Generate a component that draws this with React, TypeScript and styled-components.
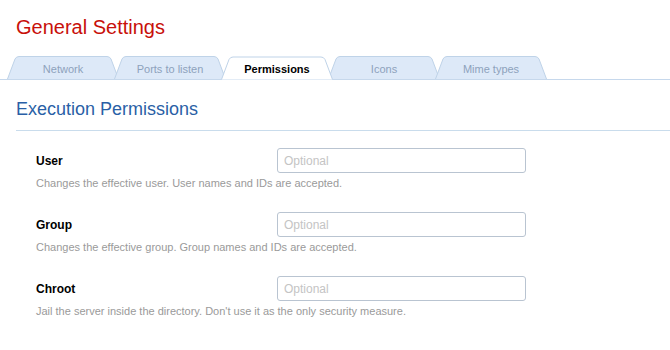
import {createGlobalStyle} from 'styled-components';
import styled from 'styled-components';

const tabs = ['Network', 'Ports to listen', 'Permissions', 'Icons', 'Mime types'];
const activeTab = 'Permissions';

const fields = [
    {label: 'User', help: 'Changes the effective user. User names and IDs are accepted.'},
    {label: 'Group', help: 'Changes the effective group. Group names and IDs are accepted.'},
    {label: 'Chroot', help: "Jail the server inside the directory. Don't use it as the only security measure."},
];

const TAB_W = 112;
const TAB_H = 23;

const TabShape: React.FC<{active: boolean}> = function ({active}) {
    const w = TAB_W;
    const h = TAB_H;
    const d = `M0.5,${h} L8,3 Q9.3,0.5 12,0.5 L${w - 12},0.5 Q${w - 9.3},0.5 ${w - 8},3 L${w - 0.5},${h}`;
    return (
        <TabSvg width={w} height={h} viewBox={`0 0 ${w} ${h}`}>
            <path d={d} fill={active ? '#ffffff' : '#dde9f8'} stroke="#bfd3e8" strokeWidth="1" />
        </TabSvg>
    );
};

const App: React.FC = function () {
    return (
        <Page>
            <GlobalStyle />
            <Title>General Settings</Title>
            <TabBar>
                {tabs.map(t => (
                    <Tab key={t} $active={t === activeTab}>
                        <TabShape active={t === activeTab} />
                        <TabLabel $active={t === activeTab}>{t}</TabLabel>
                    </Tab>
                ))}
            </TabBar>
            <Section>
                <SectionTitle>Execution Permissions</SectionTitle>
                {fields.map(f => (
                    <Field key={f.label}>
                        <FieldRow>
                            <Label>{f.label}</Label>
                            <Input placeholder="Optional" />
                        </FieldRow>
                        <Help>{f.help}</Help>
                    </Field>
                ))}
            </Section>
        </Page>
    );
};

/* Styled components */

const GlobalStyle = createGlobalStyle`
    body {
        margin: 0;
        background: #ffffff;
        font-family: "Liberation Sans", Arial, sans-serif;
    }
`;

const Page = styled.div`
    width: 670px;
    height: 350px;
    overflow: hidden;
    padding-top: 15px;
    box-sizing: border-box;
`;

const Title = styled.h1`
    margin: 0 0 17px 16px;
    font-size: 20px;
    line-height: 24px;
    font-weight: normal;
    color: #c8100a;
`;

const TabBar = styled.div`
    display: flex;
    height: 23px;
    padding-left: 7px;
    border-bottom: 1px solid #c6d8ec;
`;

const Tab = styled.div<{$active: boolean}>`
    position: relative;
    width: ${TAB_W}px;
    margin-right: -5px;
    margin-bottom: ${p => (p.$active ? '-1px' : '0')};
    height: ${p => (p.$active ? TAB_H + 1 : TAB_H)}px;
    z-index: ${p => (p.$active ? 2 : 1)};
    display: flex;
    justify-content: center;
    align-items: flex-start;
`;

const TabSvg = styled.svg`
    position: absolute;
    left: 0;
    top: 0;
    height: 100%;
    overflow: visible;
`;

const TabLabel = styled.span<{$active: boolean}>`
    position: relative;
    margin-top: 7px;
    font-size: 11px;
    line-height: 13px;
    font-weight: ${p => (p.$active ? 'bold' : 'normal')};
    color: ${p => (p.$active ? '#000000' : '#8da2bc')};
`;

const Section = styled.div`
    padding: 0 0 0 16px;
    margin-top: 18px;
`;

const SectionTitle = styled.h2`
    margin: 0 0 17px 0;
    padding-bottom: 10px;
    border-bottom: 1px solid #c9dcec;
    font-size: 18px;
    line-height: 22px;
    font-weight: normal;
    color: #2a5fa6;
`;

const Field = styled.div`
    padding-left: 20px;
    margin-bottom: 22px;
`;

const FieldRow = styled.div`
    display: flex;
    align-items: center;
`;

const Label = styled.label`
    width: 241px;
    font-size: 12px;
    line-height: 14px;
    font-weight: bold;
    color: #000000;
`;

const Input = styled.input`
    width: 249px;
    height: 25px;
    box-sizing: border-box;
    border: 1px solid #b9c4d1;
    border-radius: 3px;
    padding: 0 6px;
    font-family: "Liberation Sans", Arial, sans-serif;
    font-size: 12px;
    color: #333333;
    outline: none;
    &::placeholder {
        color: #c4c4c4;
    }
`;

const Help = styled.div`
    margin-top: 3px;
    font-size: 11px;
    line-height: 14px;
    color: #9a9a9a;
`;

export default App;
